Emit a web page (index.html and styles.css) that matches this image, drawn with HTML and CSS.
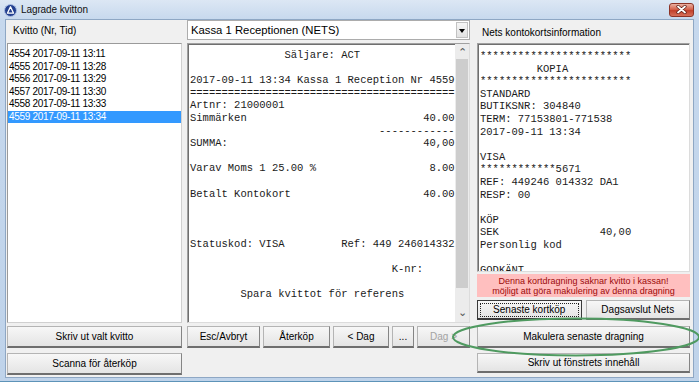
FILE: index.html
```html
<!DOCTYPE html>
<html lang="sv">
<head>
    <meta charset="UTF-8">
    <title>Lagrade kvitton</title>
    <link rel="stylesheet" href="styles.css">
</head>
<body>
    <div class="window">
        <div class="titlebar">
            <svg class="app-icon" width="13" height="13" viewBox="0 0 13 13">
                <circle cx="6.5" cy="6.5" r="6" fill="#23408f" stroke="#a9bde3" stroke-width="1"/>
                <path d="M6.5 2.8 L9.6 9.2 L3.4 9.2 Z" fill="none" stroke="#fff" stroke-width="1.3" stroke-linejoin="round"/>
            </svg>
            <span class="title">Lagrade kvitton</span>
            <div class="close-btn">
                <svg width="11" height="9" viewBox="0 0 11 9">
                    <path d="M2 1.5 L9 7.5 M9 1.5 L2 7.5" stroke="#5a1a12" stroke-width="3.2" stroke-linecap="round"/>
                    <path d="M2 1.5 L9 7.5 M9 1.5 L2 7.5" stroke="#fff" stroke-width="1.8" stroke-linecap="round"/>
                </svg>
            </div>
        </div>

        <div class="client">
            <div class="col col-left">
                <div class="label">Kvitto (Nr, Tid)</div>
                <ul class="listbox">
                    <li>4554 2017-09-11 13:11</li>
                    <li>4555 2017-09-11 13:28</li>
                    <li>4556 2017-09-11 13:29</li>
                    <li>4557 2017-09-11 13:30</li>
                    <li>4558 2017-09-11 13:33</li>
                    <li class="selected">4559 2017-09-11 13:34</li>
                </ul>
                <button class="btn btn-print">Skriv ut valt kvitto</button>
                <button class="btn btn-scan">Scanna för återköp</button>
            </div>

            <div class="col col-mid">
                <div class="combo">
                    <span class="combo-text">Kassa 1 Receptionen (NETS)</span>
                    <span class="combo-arrow"></span>
                </div>
                <div class="textbox receipt">
<pre>               Säljare: ACT

2017-09-11 13:34 Kassa 1 Reception Nr 4559
==========================================
Artnr: 21000001
Simmärken                            40.00
                              ------------
SUMMA:                               40,00

Varav Moms 1 25.00 %                  8.00

Betalt Kontokort                     40.00



Statuskod: VISA         Ref: 449 246014332

                                K-nr:

        Spara kvittot för referens</pre>
                    <div class="scrollbar">
                        <span class="sb-arrow">&#8963;</span>
                        <span class="sb-thumb"></span>
                        <span class="sb-track"></span>
                        <span class="sb-arrow sb-down">&#8964;</span>
                    </div>
                </div>
                <div class="btn-row">
                    <button class="btn w-esc">Esc/Avbryt</button>
                    <button class="btn w-ater">Återköp</button>
                    <button class="btn w-prev">&lt; Dag</button>
                    <button class="btn w-dots">...</button>
                    <button class="btn w-next disabled">Dag &gt;</button>
                </div>
            </div>

            <div class="col col-right">
                <div class="label">Nets kontokortsinformation</div>
                <div class="textbox cardinfo">
<pre>************************
         KOPIA
************************
STANDARD
BUTIKSNR: 304840
TERM: 77153801-771538
2017-09-11 13:34

VISA
************5671
REF: 449246 014332 DA1
RESP: 00

KÖP
SEK                40,00
Personlig kod

GODKÄNT</pre>
                </div>
                <div class="warning">
                    Denna kortdragning saknar kvitto i kassan!<br>
                    möjligt att göra makulering av denna dragning
                </div>
                <div class="btn-row">
                    <button class="btn half focused">Senaste kortköp</button>
                    <button class="btn half">Dagsavslut Nets</button>
                </div>
                <button class="btn btn-void">Makulera senaste dragning</button>
                <button class="btn btn-printwin">Skriv ut fönstrets innehåll</button>
            </div>
        </div>

        <svg class="highlight" width="699" height="382" viewBox="0 0 699 382">
            <ellipse cx="576" cy="337" rx="123" ry="18.5" fill="none" stroke="#4f9a60" stroke-width="2"/>
        </svg>
    </div>
</body>
</html>
```

FILE: styles.css
```css
* {
    margin: 0;
    padding: 0;
    box-sizing: border-box;
}

body {
    background: #fff;
    font-family: "Liberation Sans", Arial, sans-serif;
    font-size: 10px;
    color: #000;
}

.window {
    position: relative;
    width: 699px;
    height: 382px;
    display: flex;
    flex-direction: column;
    padding: 0 5px 3px 5px;
    background: linear-gradient(#dce7f4, #c6d8ed 20px, #bfd3ea);
    border-bottom: 1px solid #5d93b8;
    overflow: hidden;
}

/* title bar */
.titlebar {
    height: 20px;
    margin: 0 -5px;
    padding-left: 4px;
    display: flex;
    align-items: center;
}

.app-icon {
    margin-top: 1px;
}

.title {
    margin-left: 4px;
    font-size: 10px;
    letter-spacing: -0.1px;
    color: #111;
}

.close-btn {
    margin-left: auto;
    margin-right: 5px;
    width: 25px;
    height: 14px;
    border: 1px solid #8d3326;
    border-radius: 3px;
    background: linear-gradient(#eab1a3, #d5624c 45%, #c2402b 55%, #d6705a);
    display: flex;
    align-items: center;
    justify-content: center;
}

/* client area */
.client {
    flex: 1;
    display: flex;
    gap: 5px;
    background: #f0f0f0;
    border: 1px solid #8ea7c4;
    padding: 0 3px 2px 1px;
}

.col {
    display: flex;
    flex-direction: column;
}

.col-left { width: 175px; }
.col-mid { width: 283px; }
.col-right { width: 213px; margin-left: 2px; }

.label {
    height: 23px;
    padding: 5px 0 0 6px;
    font-size: 10px;
    line-height: 12px;
}

.col-right .label {
    padding: 7px 0 0 5px;
}

.listbox {
    list-style: none;
    height: 280px;
    background: #fff;
    border: 1px solid #9a9a9a;
    border-right-color: #d0d0d0;
    border-bottom-color: #d0d0d0;
    padding-top: 4px;
}

.listbox li {
    height: 12.5px;
    line-height: 12.5px;
    padding-left: 1px;
    font-size: 10px;
    letter-spacing: -0.3px;
    white-space: nowrap;
}

.listbox li.selected {
    background: #3399ff;
    color: #fff;
}

/* buttons */
.btn {
    display: block;
    height: 22px;
    font-family: "Liberation Sans", Arial, sans-serif;
    font-size: 10px;
    color: #000;
    background: linear-gradient(#f7f7f7, #e4e4e4);
    border: 1px solid #b4b4b4;
    border-right-color: #858585;
    border-bottom: 2px solid #6e6e6e;
}

.btn.disabled {
    color: #a3a3a3;
}

.btn.focused {
    border: 1px solid #3a3a3a;
    border-bottom-width: 2px;
    outline: 1px dotted #222;
    outline-offset: -4px;
}

.btn-print { margin-top: 3px; }
.btn-scan { margin-top: 5px; }

/* combo */
.combo {
    height: 20px;
    background: #fff;
    border: 1px solid #acacac;
    display: flex;
    align-items: center;
    padding-left: 3px;
}

.combo-text {
    font-size: 11.3px;
    flex: 1;
}

.combo-arrow {
    width: 12px;
    height: 16px;
    margin-right: 1px;
    background: linear-gradient(#f6f6f6, #e2e2e2);
    border: 1px solid #c2c2c2;
    position: relative;
}

.combo-arrow::after {
    content: "";
    position: absolute;
    left: 2px;
    top: 6px;
    border-left: 3.5px solid transparent;
    border-right: 3.5px solid transparent;
    border-top: 4px solid #000;
}

/* text boxes */
.textbox {
    background: #fff;
    border: 1px solid #a0a0a0;
    border-right-color: #dcdcdc;
    border-bottom-color: #dcdcdc;
    box-shadow: inset 1px 1px 0 #6f6f6f;
    overflow: hidden;
    display: flex;
}

.textbox pre {
    flex: 1;
    font-family: "Liberation Mono", "Courier New", monospace;
    font-size: 10.5px;
    line-height: 12.6px;
    padding: 5px 0 0 2px;
    color: #1a1a1a;
}

.receipt {
    margin-top: 3px;
    height: 280px;
}

.cardinfo {
    height: 229px;
}

.cardinfo pre {
    padding-top: 6px;
}

.scrollbar {
    width: 14px;
    display: flex;
    flex-direction: column;
    background: #ececec;
}

.sb-arrow {
    height: 15px;
    text-align: center;
    font-size: 11px;
    line-height: 17px;
    color: #555;
}

.sb-down {
    line-height: 8px;
    height: 14px;
}

.sb-thumb {
    height: 229px;
    margin: 0 1px;
    background: #cdcdcd;
}

.sb-track {
    flex: 1;
}

.btn-row {
    display: flex;
    gap: 3px;
    margin-top: 3px;
}

.w-esc { width: 73px; }
.w-ater { width: 67px; }
.w-prev { width: 56px; }
.w-dots { width: 22px; }
.w-next { width: 53px; }

/* right column */
.warning {
    margin-top: 2px;
    height: 23px;
    background: #ffbfbf;
    color: #9c0a0a;
    font-size: 9px;
    line-height: 10px;
    text-align: center;
    padding-top: 2px;
}

.col-right .btn-row {
    gap: 4px;
}

.col-right .btn-row .btn {
    height: 20px;
}

.half {
    flex: 1;
}

.btn-void {
    margin-top: 6px;
    height: 22px;
}

.btn-printwin {
    margin-top: 5px;
    height: 20px;
}

.highlight {
    position: absolute;
    left: 0;
    top: 0;
    pointer-events: none;
}
```
